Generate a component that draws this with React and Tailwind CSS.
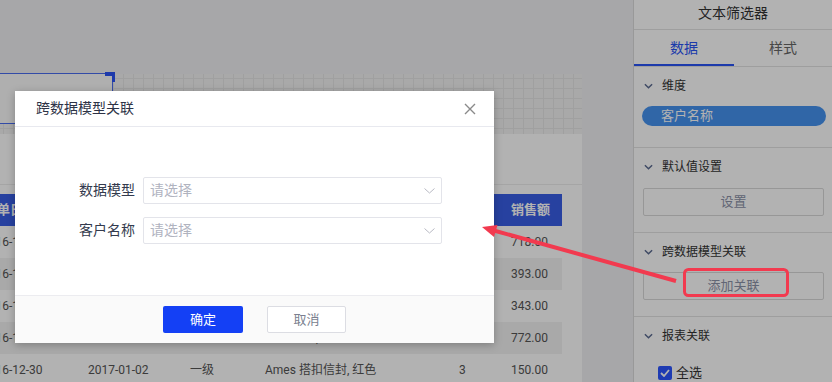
import React from 'react';

function Chev({ className }) {
  return (
    <svg width="10" height="6" viewBox="0 0 10 6" className={className}>
      <polyline points="1,1 5,5 9,1" fill="none" stroke="currentColor" strokeWidth="1.6" />
    </svg>
  );
}

const rows = [
  ['2016-12-27', '2016-12-31', '二级', '柏拉图 订书机, 实惠', '4', '718.00'],
  ['2016-12-28', '2017-01-01', '一级', '施乐 标签, 可调', '3', '393.00'],
  ['2016-12-29', '2017-01-02', '三级', 'Acme 尺子, 蓝色', '2', '343.00'],
  ['2016-12-29', '2017-01-03', '二级', '三星 手机, 全尺寸', '1', '772.00'],
  ['2016-12-30', '2017-01-02', '一级', 'Ames 搭扣信封, 红色', '3', '150.00'],
];

function Section({ title, children, className }) {
  return (
    <div className={'border-b border-[#e2e2e2] pt-[10px] ' + className}>
      <div className="h-[18px] flex items-center pl-[10px] gap-[9px] text-[12px] text-[#333]">
        <Chev className="text-[#5a6a90] w-[9px] h-[6px]" />
        <span>{title}</span>
      </div>
      {children}
    </div>
  );
}

export default function App() {
  return (
    <div className="relative w-[832px] h-[382px] overflow-hidden flex bg-[#eff0f3] font-['Roboto','Noto_Sans_CJK_SC',sans-serif]">
      {/* canvas */}
      <div className="relative w-[633px] h-full">
        <div className="absolute left-0 top-[74px] w-[582px] h-[60px] bg-[#f3f3f3] bg-[linear-gradient(to_right,#e5e5e5_1px,transparent_1px),linear-gradient(to_bottom,#e5e5e5_1px,transparent_1px)] bg-[size:10px_10px] bg-[position:3px_4px]" />
        <div className="absolute left-[-2px] top-[73px] w-[115px] h-[51px] border border-[#4a6cf0] bg-[#fbfbfb]" />
        <div className="absolute left-[105px] top-[72px] w-[10px] h-[4px] bg-[#2c54f5]" />
        <div className="absolute left-[112px] top-[72px] w-[3px] h-[10px] bg-[#2c54f5]" />

        <div className="absolute left-0 top-[134px] w-[582px] h-[248px] bg-white">
          <div className="h-[51px] border-b border-[#ececec]" />
          <div className="pt-[9px] w-[562px]">
            <div className="h-[32px] bg-[#385ee5] flex items-center text-[13px] font-bold text-white ml-[-20px]">
              <div className="w-[108px] pl-[4px]">订单日期</div>
              <div className="w-[102px]">发货日期</div>
              <div className="w-[75px]">订单等级</div>
              <div className="w-[194px]">产品名称</div>
              <div className="w-[52px]">数量</div>
              <div className="flex-1">销售额</div>
            </div>
            {rows.map((r, i) => (
              <div
                key={i}
                className={'h-[32px] flex items-center text-[12px] text-[#555] ml-[-20px] ' + (i % 2 === 1 ? 'bg-[#f2f2f2]' : 'bg-white')}
              >
                <div className="w-[108px] pl-[2px]">{r[0]}</div>
                <div className="w-[102px]">{r[1]}</div>
                <div className="w-[75px]">{r[2]}</div>
                <div className="w-[194px]">{r[3]}</div>
                <div className="w-[52px]">{r[4]}</div>
                <div className="flex-1">{r[5]}</div>
              </div>
            ))}
          </div>
        </div>
      </div>

      {/* right panel */}
      <aside className="w-[199px] h-full border-l border-[#dcdcdc] bg-white flex flex-col">
        <div className="h-[30px] shrink-0 border-b border-[#e2e2e2] flex items-center justify-center pb-[3px] text-[14px] text-[#333]">文本筛选器</div>
        <div className="h-[37px] shrink-0 border-b border-[#e2e2e2] flex">
          <div className="relative w-[100px] flex items-center justify-center text-[14px] text-[#2953f5]">
            数据
            <div className="absolute left-0 right-0 bottom-0 h-[2px] bg-[#2953f5]" />
          </div>
          <div className="flex-1 flex items-center justify-center text-[14px] text-[#666]">样式</div>
        </div>
        <Section title="维度" className="h-[81px] shrink-0">
          <div className="mt-[11px] ml-[8px] mr-[6px] h-[20px] rounded-full bg-[#4693f0] flex items-center pl-[19px] text-[13px] text-white">客户名称</div>
        </Section>
        <Section title="默认值设置" className="h-[85px] shrink-0">
          <div className="mt-[12px] ml-[9px] mr-[8px] h-[28px] border border-[#d9d9d9] rounded-[2px] flex items-center justify-center text-[13px] text-[#8c93a8]">设置</div>
        </Section>
        <Section title="跨数据模型关联" className="h-[84px] shrink-0">
          <div className="mt-[11px] ml-[9px] mr-[8px] h-[28px] border border-[#d9d9d9] rounded-[2px] flex items-center justify-center text-[13px] text-[#8c93a8]">添加关联</div>
        </Section>
        <div className="pt-[10px]">
          <div className="h-[18px] flex items-center pl-[10px] gap-[9px] text-[12px] text-[#333]">
            <Chev className="text-[#5a6a90] w-[9px] h-[6px]" />
            <span>报表关联</span>
          </div>
          <div className="mt-[18px] pl-[24px] flex items-center gap-[4px] text-[13px] text-[#333]">
            <div className="w-[14px] h-[14px] rounded-[2px] bg-[#2c55ff] flex items-center justify-center">
              <svg width="10" height="8" viewBox="0 0 10 8">
                <polyline points="1,4 4,7 9,1" fill="none" stroke="white" strokeWidth="1.8" />
              </svg>
            </div>
            <span>全选</span>
          </div>
        </div>
      </aside>

      {/* mask */}
      <div className="absolute inset-0 bg-black/30" />

      {/* modal */}
      <div className="absolute left-[15px] top-[91px] w-[479px] h-[252px] bg-white flex flex-col shadow-[0_2px_8px_rgba(0,0,0,0.25)]">
        <div className="h-[36px] shrink-0 border-b border-[#e8e9ef] flex items-center justify-between pl-[21px] pr-[18px]">
          <span className="text-[14px] text-[#2e3347]">跨数据模型关联</span>
          <svg width="12" height="12" viewBox="0 0 12 12">
            <path d="M1 1 L11 11 M11 1 L1 11" stroke="#8a8a8a" strokeWidth="1.4" />
          </svg>
        </div>
        <div className="flex-1 pt-[50px] flex flex-col gap-[13px]">
          {['数据模型', '客户名称'].map((l) => (
            <div key={l} className="flex items-center">
              <div className="w-[128px] shrink-0 pr-[8px] text-right text-[14px] text-[#333a4d]">{l}</div>
              <div className="w-[299px] h-[27px] border border-[#e3e4ea] rounded-[2px] flex items-center justify-between pl-[6px] pr-[6px]">
                <span className="text-[14px] text-[#b0b3bf]">请选择</span>
                <svg width="11" height="6" viewBox="0 0 11 6">
                  <polyline points="0.5,0.5 5.5,5 10.5,0.5" fill="none" stroke="#b8bac4" strokeWidth="1" />
                </svg>
              </div>
            </div>
          ))}
        </div>
        <div className="h-[48px] shrink-0 border-t border-[#ececf0] bg-[#fafafa] flex items-center justify-center gap-[24px]">
          <div className="w-[80px] h-[27px] rounded-[2px] bg-[#1440f5] flex items-center justify-center text-[13px] text-white">确定</div>
          <div className="w-[79px] h-[27px] rounded-[2px] bg-white border border-[#dcdde3] flex items-center justify-center text-[13px] text-[#7a7f8f]">取消</div>
        </div>
      </div>

      {/* annotations */}
      <svg className="absolute left-0 top-0 pointer-events-none" width="832" height="382" viewBox="0 0 832 382">
        <rect x="684.5" y="269.5" width="103" height="26" rx="4" fill="none" stroke="#f23a4f" strokeWidth="3" />
        <line x1="676" y1="281" x2="492" y2="230" stroke="#f23a4f" strokeWidth="4" />
        <polygon points="482,227 494,237 497.5,225" fill="#f23a4f" />
      </svg>
    </div>
  );
}
